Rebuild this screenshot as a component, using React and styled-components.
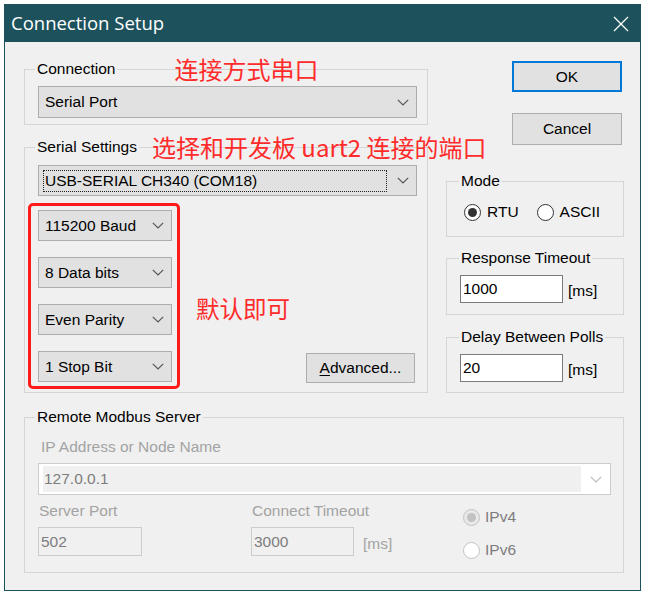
import React from 'react';
import styled, { createGlobalStyle } from 'styled-components';

const UI = '"Liberation Sans", Arial, sans-serif';
const CJK = '"Noto Sans CJK SC", "Noto Sans", sans-serif';

const Global = createGlobalStyle`
  html, body { margin: 0; padding: 0; background: #ffffff; }
  body { font-family: ${UI}; }
  * { box-sizing: border-box; }
`;

const Page = styled.div`
  width: 647px;
  height: 602px;
  padding: 4px 0 0 4px;
  background: #ffffff;
`;

const Window = styled.div`
  width: 637px;
  border: 1px solid #1d525d;
  background: #f0f0f0;
  display: flex;
  flex-direction: column;
`;

const TitleBar = styled.div`
  height: 37px;
  background: #1d525d;
  color: #ffffff;
  display: flex;
  align-items: center;
  justify-content: space-between;
  padding: 0 11px 2px 6px;
  font-family: "Open Sans", "Noto Sans", sans-serif;
  font-size: 18.5px;
`;

const CloseIcon = styled.svg`
  width: 16px;
  height: 16px;
  margin-top: 2px;
`;

const Body = styled.div`
  display: grid;
  grid-template-columns: 404px 178px;
  column-gap: 18px;
  padding: 0 16px 17px 19px;
  font-size: 15.5px;
  color: #000000;
`;

const Column = styled.div`
  display: flex;
  flex-direction: column;
`;

const Group = styled.div`
  display: flex;
  flex-direction: column;
  margin-top: ${(p) => p.$mt}px;
  border: 1px solid #d5d5d5;
  padding: 0 ${(p) => p.$pr}px ${(p) => p.$pb}px ${(p) => p.$pl}px;
  grid-column: ${(p) => (p.$wide ? '1 / -1' : 'auto')};
`;

const GroupHead = styled.div`
  display: flex;
  align-items: center;
  height: 18px;
  margin-top: -10px;
  margin-left: ${(p) => p.$ml}px;
`;

const GroupTitle = styled.span`
  padding: 0 2px;
  background: #f0f0f0;
  line-height: 18px;
  white-space: nowrap;
`;

const Note = styled.span`
  font-family: ${CJK};
  font-size: 24px;
  line-height: 18px;
  color: #ff2b2b;
  white-space: nowrap;
  margin-left: ${(p) => p.$ml || 0}px;
`;

const Combo = styled.div`
  display: flex;
  align-items: center;
  height: ${(p) => p.$h}px;
  margin-top: ${(p) => p.$mt || 0}px;
  background: #e1e1e1;
  border: 1px solid #adadad;
  padding: 0 7px 0 6px;
  white-space: nowrap;
`;

const ComboText = styled.span`
  flex: 1;
  line-height: 20px;
  ${(p) =>
    p.$focus
      ? `border: 1px dotted #202020; margin: 0 10px 0 -2px; padding-left: 1px;`
      : ''}
`;

const Chevron = ({ color = '#555555' }) => (
  <svg width="12" height="7" viewBox="0 0 12 7">
    <polyline points="0.8,0.8 6,6 11.2,0.8" fill="none" stroke={color} strokeWidth="1.2" />
  </svg>
);

const LowerRow = styled.div`
  display: flex;
  margin-top: 7px;
`;

const Callout = styled.div`
  display: flex;
  flex-direction: column;
  gap: 16px;
  width: 152px;
  margin-left: -10px;
  border: 3px solid #ff1a1a;
  border-radius: 5px;
  padding: 4px 5px 4px 7px;
`;

const SideNote = styled(Note)`
  align-self: center;
  margin-left: 16px;
  margin-top: 24px;
  line-height: 24px;
  font-size: 23.5px;
`;

const Button = styled.button`
  width: ${(p) => p.$w}px;
  height: ${(p) => p.$h}px;
  margin: ${(p) => p.$m || '0'};
  align-self: flex-end;
  padding: 0;
  background: #e1e1e1;
  border: ${(p) => (p.$default ? '2px solid #0078d7' : '1px solid #adadad')};
  font-family: ${UI};
  font-size: 15.5px;
  color: #000000;
  u { text-decoration: underline; text-underline-offset: 2px; }
`;

const RadioRow = styled.div`
  display: flex;
  align-items: center;
  margin-top: ${(p) => p.$mt || 0}px;
  gap: 18px;
`;

const RadioItem = styled.label`
  display: flex;
  align-items: center;
  gap: ${(p) => p.$gap || 6}px;
  height: 18px;
  line-height: 18px;
  color: ${(p) => (p.$disabled ? '#7d7d7d' : '#000000')};
`;

const RadioDot = styled.span`
  width: 17px;
  height: 17px;
  border-radius: 50%;
  border: 1px solid ${(p) => (p.$disabled ? '#c2c2c2' : '#333333')};
  background: ${(p) => (p.$disabled && p.$checked ? '#e8e8e8' : '#ffffff')};
  display: flex;
  align-items: center;
  justify-content: center;
  &::after {
    content: '';
    display: ${(p) => (p.$checked ? 'block' : 'none')};
    width: 9px;
    height: 9px;
    border-radius: 50%;
    background: ${(p) => (p.$disabled ? '#c2c2c2' : '#333333')};
  }
`;

const FieldRow = styled.div`
  display: flex;
  align-items: center;
  margin-top: ${(p) => p.$mt || 0}px;
`;

const Edit = styled.div`
  width: ${(p) => p.$w}px;
  height: ${(p) => p.$h}px;
  display: flex;
  align-items: center;
  padding-left: 2px;
  border: 1px solid ${(p) => (p.$disabled ? '#cccccc' : '#7a7a7a')};
  background: ${(p) => (p.$disabled ? '#f0f0f0' : '#ffffff')};
  color: ${(p) => (p.$disabled ? '#7d7d7d' : '#000000')};
`;

const Unit = styled.span`
  margin-left: ${(p) => p.$ml}px;
  padding-top: 4px;
  color: ${(p) => (p.$disabled ? '#a3a3a3' : '#000000')};
`;

const DimLabel = styled.div`
  line-height: 18px;
  margin: ${(p) => p.$mt || 0}px 0 0 ${(p) => p.$ml || 0}px;
  color: #a3a3a3;
  white-space: nowrap;
`;

const DimCombo = styled.div`
  display: flex;
  height: 32px;
  margin-top: 7px;
  padding: 2px 0 2px 4px;
  border: 1px solid #cccccc;
  background: #ffffff;
`;

const DimField = styled.div`
  flex: 1;
  display: flex;
  align-items: center;
  padding-left: 1px;
  background: #f0f0f0;
  color: #7d7d7d;
`;

const DimArrow = styled.div`
  width: 29px;
  display: flex;
  align-items: center;
  justify-content: center;
`;

const BottomRow = styled.div`
  display: grid;
  grid-template-columns: 213px 212px 1fr;
  margin-top: 7px;
`;

const RadioStack = styled.div`
  display: flex;
  flex-direction: column;
  gap: 15px;
  padding-top: 6px;
`;

export default function App() {
  return (
    <Page>
      <Global />
      <Window>
        <TitleBar>
          <span>Connection Setup</span>
          <CloseIcon viewBox="0 0 16 16">
            <line x1="1" y1="1" x2="15" y2="15" stroke="#ffffff" strokeWidth="1.2" />
            <line x1="15" y1="1" x2="1" y2="15" stroke="#ffffff" strokeWidth="1.2" />
          </CloseIcon>
        </TitleBar>
        <Body>
          <Column>
            <Group $mt={27} $pl={13} $pr={10} $pb={6}>
              <GroupHead $ml={-3}>
                <GroupTitle>Connection</GroupTitle>
                <Note $ml={57}>连接方式串口</Note>
              </GroupHead>
              <Combo $h={32} $mt={8}>
                <ComboText>Serial Port</ComboText>
                <Chevron />
              </Combo>
            </Group>
            <Group $mt={22} $pl={13} $pr={10} $pb={3}>
              <GroupHead $ml={-3}>
                <GroupTitle>Serial Settings</GroupTitle>
                <Note $ml={13}>选择和开发板 uart2 连接的端口</Note>
              </GroupHead>
              <Combo $h={31} $mt={9}>
                <ComboText $focus>USB-SERIAL CH340 (COM18)</ComboText>
                <Chevron />
              </Combo>
              <LowerRow>
                <Callout>
                  {['115200 Baud', '8 Data bits', 'Even Parity', '1 Stop Bit'].map((t) => (
                    <Combo key={t} $h={31}>
                      <ComboText>{t}</ComboText>
                      <Chevron />
                    </Combo>
                  ))}
                </Callout>
                <SideNote>默认即可</SideNote>
                <Button $w={109} $h={30} $m="0 2px 6px auto">
                  <u>A</u>dvanced...
                </Button>
              </LowerRow>
            </Group>
          </Column>
          <Column>
            <Button $default $w={110} $h={31} $m="19px 2px 0 0">OK</Button>
            <Button $w={110} $h={32} $m="21px 2px 0 0">Cancel</Button>
            <Group $mt={36} $pl={17} $pr={10} $pb={15}>
              <GroupHead $ml={-5}>
                <GroupTitle>Mode</GroupTitle>
              </GroupHead>
              <RadioRow $mt={13}>
                <RadioItem>
                  <RadioDot $checked />
                  RTU
                </RadioItem>
                <RadioItem>
                  <RadioDot />
                  ASCII
                </RadioItem>
              </RadioRow>
            </Group>
            <Group $mt={21} $pl={13} $pr={10} $pb={11}>
              <GroupHead $ml={-1}>
                <GroupTitle>Response Timeout</GroupTitle>
              </GroupHead>
              <FieldRow $mt={8}>
                <Edit $w={103} $h={28}>1000</Edit>
                <Unit $ml={5}>[ms]</Unit>
              </FieldRow>
            </Group>
            <Group $mt={22} $pl={13} $pr={10} $pb={10}>
              <GroupHead $ml={-1}>
                <GroupTitle>Delay Between Polls</GroupTitle>
              </GroupHead>
              <FieldRow $mt={8}>
                <Edit $w={103} $h={28}>20</Edit>
                <Unit $ml={5}>[ms]</Unit>
              </FieldRow>
            </Group>
          </Column>
          <Group $wide $mt={24} $pl={13} $pr={12} $pb={13}>
            <GroupHead $ml={-3}>
              <GroupTitle>Remote Modbus Server</GroupTitle>
            </GroupHead>
            <DimLabel $mt={12} $ml={3}>IP Address or Node Name</DimLabel>
            <DimCombo>
              <DimField>127.0.0.1</DimField>
              <DimArrow>
                <Chevron color="#bdbdbd" />
              </DimArrow>
            </DimCombo>
            <BottomRow>
              <Column>
                <DimLabel $ml={1}>Server Port</DimLabel>
                <FieldRow $mt={7}>
                  <Edit $disabled $w={104} $h={29}>502</Edit>
                </FieldRow>
              </Column>
              <Column>
                <DimLabel $ml={1}>Connect Timeout</DimLabel>
                <FieldRow $mt={7}>
                  <Edit $disabled $w={103} $h={29}>3000</Edit>
                  <Unit $disabled $ml={9}>[ms]</Unit>
                </FieldRow>
              </Column>
              <RadioStack>
                <RadioItem $disabled $gap={5}>
                  <RadioDot $disabled $checked />
                  IPv4
                </RadioItem>
                <RadioItem $disabled $gap={5}>
                  <RadioDot $disabled />
                  IPv6
                </RadioItem>
              </RadioStack>
            </BottomRow>
          </Group>
        </Body>
      </Window>
    </Page>
  );
}
